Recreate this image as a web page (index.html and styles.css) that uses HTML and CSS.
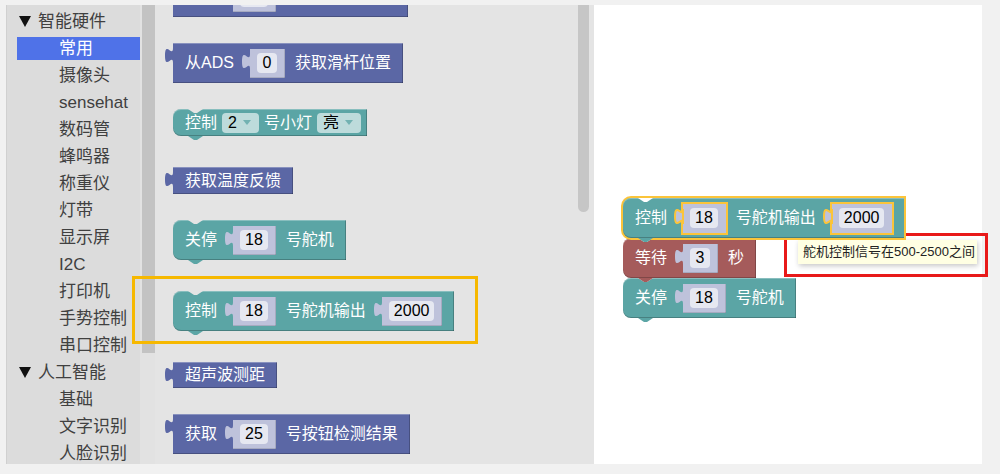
FILE: index.html
```html
<!DOCTYPE html>
<html lang="zh">
<head>
<meta charset="utf-8">
<title>Blockly</title>
<link rel="stylesheet" href="styles.css">
</head>
<body>
<div class="app">
  <aside class="toolbox">
    <div class="cat head"><i class="tri"></i>智能硬件</div>
    <div class="cat sub active">常用</div>
    <div class="cat sub">摄像头</div>
    <div class="cat sub">sensehat</div>
    <div class="cat sub">数码管</div>
    <div class="cat sub">蜂鸣器</div>
    <div class="cat sub">称重仪</div>
    <div class="cat sub">灯带</div>
    <div class="cat sub">显示屏</div>
    <div class="cat sub">I2C</div>
    <div class="cat sub">打印机</div>
    <div class="cat sub">手势控制</div>
    <div class="cat sub">串口控制</div>
    <div class="cat head"><i class="tri"></i>人工智能</div>
    <div class="cat sub">基础</div>
    <div class="cat sub">文字识别</div>
    <div class="cat sub">人脸识别</div>
  </aside>
  <div class="tb-scroll"><div class="tb-thumb"></div></div>

  <div class="flyout">
    <div class="fly-list">
      <div class="blk purple h40">
        <svg class="otab" viewBox="0 0 8 15"><path d="M8,0 C8,10 0,-8 0,7.5 S8,5 8,15Z"/></svg>
        <span class="gap-a"></span>
        <span class="slot"><svg class="otab" viewBox="0 0 8 15"><path d="M8,0 C8,10 0,-8 0,7.5 S8,5 8,15Z"/></svg><span class="fld fld-empty"></span></span>
        <span class="gap-b"></span>
      </div>

      <div class="blk purple h40">
        <svg class="otab" viewBox="0 0 8 15"><path d="M8,0 C8,10 0,-8 0,7.5 S8,5 8,15Z"/></svg>
        <span class="lbl">从ADS</span>
        <span class="slot"><svg class="otab" viewBox="0 0 8 15"><path d="M8,0 C8,10 0,-8 0,7.5 S8,5 8,15Z"/></svg><span class="fld">0</span></span>
        <span class="lbl">获取滑杆位置</span>
      </div>

      <div class="blk teal stmt h27">
        <span class="lbl">控制</span>
        <span class="dd">2<i class="arr"></i></span>
        <span class="lbl">号小灯</span>
        <span class="dd">亮<i class="arr"></i></span>
      </div>

      <div class="blk purple h27">
        <svg class="otab" viewBox="0 0 8 15"><path d="M8,0 C8,10 0,-8 0,7.5 S8,5 8,15Z"/></svg>
        <span class="lbl">获取温度反馈</span>
      </div>

      <div class="blk teal stmt h40">
        <span class="lbl">关停</span>
        <span class="slot"><svg class="otab" viewBox="0 0 8 15"><path d="M8,0 C8,10 0,-8 0,7.5 S8,5 8,15Z"/></svg><span class="fld">18</span></span>
        <span class="lbl">号舵机</span>
      </div>

      <div class="blk teal stmt h40">
        <span class="lbl">控制</span>
        <span class="slot"><svg class="otab" viewBox="0 0 8 15"><path d="M8,0 C8,10 0,-8 0,7.5 S8,5 8,15Z"/></svg><span class="fld">18</span></span>
        <span class="lbl">号舵机输出</span>
        <span class="slot"><svg class="otab" viewBox="0 0 8 15"><path d="M8,0 C8,10 0,-8 0,7.5 S8,5 8,15Z"/></svg><span class="fld">2000</span></span>
      </div>

      <div class="blk purple h26">
        <svg class="otab" viewBox="0 0 8 15"><path d="M8,0 C8,10 0,-8 0,7.5 S8,5 8,15Z"/></svg>
        <span class="lbl">超声波测距</span>
      </div>

      <div class="blk purple h40">
        <svg class="otab" viewBox="0 0 8 15"><path d="M8,0 C8,10 0,-8 0,7.5 S8,5 8,15Z"/></svg>
        <span class="lbl">获取</span>
        <span class="slot"><svg class="otab" viewBox="0 0 8 15"><path d="M8,0 C8,10 0,-8 0,7.5 S8,5 8,15Z"/></svg><span class="fld">25</span></span>
        <span class="lbl">号按钮检测结果</span>
      </div>
    </div>
    <div class="fly-thumb"></div>
  </div>

  <div class="workspace">
    <div class="stack">
      <div class="blk teal stmt h40 picked">
        <span class="lbl">控制</span>
        <span class="slot"><svg class="otab" viewBox="0 0 8 15"><path d="M8,0 C8,10 0,-8 0,7.5 S8,5 8,15Z"/></svg><span class="fld">18</span></span>
        <span class="lbl">号舵机输出</span>
        <span class="slot"><svg class="otab" viewBox="0 0 8 15"><path d="M8,0 C8,10 0,-8 0,7.5 S8,5 8,15Z"/></svg><span class="fld">2000</span></span>
      </div>
      <div class="blk red stmt h40">
        <span class="lbl">等待</span>
        <span class="slot"><svg class="otab" viewBox="0 0 8 15"><path d="M8,0 C8,10 0,-8 0,7.5 S8,5 8,15Z"/></svg><span class="fld">3</span></span>
        <span class="lbl">秒</span>
      </div>
      <div class="blk teal stmt h40">
        <span class="lbl">关停</span>
        <span class="slot"><svg class="otab" viewBox="0 0 8 15"><path d="M8,0 C8,10 0,-8 0,7.5 S8,5 8,15Z"/></svg><span class="fld">18</span></span>
        <span class="lbl">号舵机</span>
      </div>
    </div>
    <div class="tooltip">舵机控制信号在500-2500之间</div>
  </div>

  <div class="mark-amber"></div>
  <div class="mark-red"></div>
</div>
</body>
</html>
```

FILE: styles.css
```css
* { box-sizing: border-box; }

body {
  margin: 0;
  background: #f1f1f1;
  font-family: "Liberation Sans", "Noto Sans CJK SC", sans-serif;
}

.app {
  position: relative;
  display: flex;
  width: 1000px;
  height: 464px;
  padding: 5px 0 0 6px;
}

/* ---------- toolbox ---------- */
.toolbox {
  width: 134px;
  padding: 5px 0 0 10px;
  background: #dcdcdc;
  border-left: 1px solid #d0d0d0;
  display: flex;
  flex-direction: column;
  gap: 4px;
}

.cat {
  height: 23px;
  line-height: 23px;
  font-size: 17px;
  color: #404040;
  white-space: nowrap;
}

.cat.head {
  padding-left: 2px;
  display: flex;
  align-items: center;
}

.tri {
  width: 0;
  height: 0;
  border-left: 6.5px solid transparent;
  border-right: 6.5px solid transparent;
  border-top: 11px solid #111;
  margin-right: 7px;
}

.cat.sub { padding-left: 42px; }

.cat.active {
  background: #4f72e8;
  color: #fff;
}

.tb-scroll {
  width: 15px;
  padding-left: 2px;
  background: #e2e2e2;
}

.tb-thumb {
  height: 348px;
  background: #c3c3c3;
}

/* ---------- flyout ---------- */
.flyout {
  --bg: #e4e4e4;
  position: relative;
  width: 439px;
  background: #e4e4e4;
  overflow: hidden;
}

.fly-list {
  display: flex;
  flex-direction: column;
  align-items: flex-start;
  gap: 26px;
  padding-left: 18px;
}

.fly-list > :first-child { margin-top: -28px; }

.gap-a { width: 32px; }
.gap-b { width: 110px; }
.fld-empty { width: 28px; }

.fly-thumb {
  position: absolute;
  left: 423px;
  top: 0;
  width: 11px;
  height: 207px;
  background: #c6c6c6;
  border-radius: 0 0 6px 6px;
}

/* ---------- workspace ---------- */
.workspace {
  --bg: #ffffff;
  position: relative;
  width: 388px;
  background: #fff;
}

.stack {
  position: absolute;
  left: 29px;
  top: 193px;
  display: flex;
  flex-direction: column;
  align-items: flex-start;
}

.stack .stmt { margin-bottom: 0; }

.tooltip {
  position: absolute;
  left: 204px;
  top: 235px;
  width: 179px;
  height: 24px;
  padding-left: 5px;
  line-height: 24px;
  font-size: 13px;
  color: #222;
  white-space: nowrap;
  background: #ffffe3;
  box-shadow: 1px 2px 5px rgba(0, 0, 0, 0.22);
}

/* ---------- blocks ---------- */
.blk {
  position: relative;
  display: flex;
  align-items: center;
  flex-shrink: 0;
  padding: 0 12px;
  color: #fff;
  font-size: 16px;
  line-height: 20px;
  white-space: nowrap;
  box-shadow: inset 0 1px 0 rgba(255, 255, 255, 0.28),
              inset 0 -1px 0 rgba(0, 0, 0, 0.22),
              inset -1px 0 0 rgba(0, 0, 0, 0.22);
}

.h40 { height: 40px; }
.h27 { height: 27px; }
.h26 { height: 26px; }

.purple { background: #5b67a5; }
.teal { background: #5ba5a5; }
.red { background: #a55b5b; }

.purple > .otab { fill: #5b67a5; }

.otab {
  position: absolute;
  left: -8px;
  top: 5px;
  width: 8px;
  height: 15px;
  overflow: visible;
}

.stmt {
  border-radius: 8px 0 0 8px;
  margin-bottom: 5px;
}

.stmt::before {
  content: "";
  position: absolute;
  left: 15px;
  top: 0;
  width: 15px;
  height: 4px;
  background: var(--bg);
  clip-path: polygon(0 0, 100% 0, 60% 100%, 40% 100%);
}

.stmt::after {
  content: "";
  position: absolute;
  left: 15px;
  bottom: -4px;
  width: 15px;
  height: 4px;
  background: inherit;
  clip-path: polygon(0 0, 100% 0, 60% 100%, 40% 100%);
  z-index: 2;
}

.slot {
  position: relative;
  display: flex;
  align-items: center;
  height: 29px;
  padding: 0 8px 0 7px;
  margin: 0 10px 0 16px;
  background: #bec2db;
  box-shadow: inset 0 -1px 0 rgba(0, 0, 0, 0.12), inset -1px 0 0 rgba(0, 0, 0, 0.12);
}

.slot:last-child { margin-right: 0; }

.slot .otab { fill: #bec2db; }

.fld {
  min-width: 20px;
  height: 20px;
  padding: 0 5px;
  line-height: 20px;
  text-align: center;
  color: #000;
  background: #e6e8f1;
  border-radius: 4px;
}

.dd {
  display: flex;
  align-items: center;
  gap: 6px;
  height: 20px;
  padding: 0 8px 0 6px;
  margin: 0 5px;
  color: #000;
  background: #bddbdb;
  border-radius: 4px;
}

.dd:last-child { margin-right: -6px; }

.arr {
  width: 0;
  height: 0;
  border-left: 4px solid transparent;
  border-right: 4px solid transparent;
  border-top: 5px solid #72b2b2;
}

/* selected block in the workspace */
.picked {
  z-index: 3;
  box-shadow: 0 0 0 2px #fbc43a,
              inset 0 1px 0 rgba(255, 255, 255, 0.28),
              inset 0 -1px 0 rgba(0, 0, 0, 0.22);
}

.picked .slot { box-shadow: 0 0 0 2px #fbc43a; }

.picked .slot .otab path {
  stroke: #fbc43a;
  stroke-width: 2;
}

/* annotation frames */
.mark-amber {
  position: absolute;
  left: 132px;
  top: 276px;
  width: 346px;
  height: 68px;
  border: 3px solid #f6b800;
}

.mark-red {
  position: absolute;
  left: 784px;
  top: 233px;
  width: 204px;
  height: 44px;
  border: 3px solid #e81919;
}
```
